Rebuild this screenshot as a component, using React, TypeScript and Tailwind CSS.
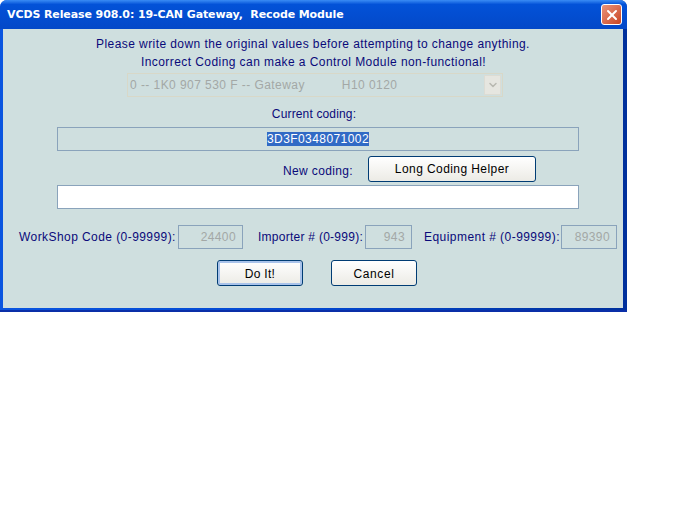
import React from 'react';
import { ChevronDown, X } from 'lucide-react';

const ReadOnlyNumber = ({ value, width }: { value: string; width: string }) => (
  <div className={`${width} h-[24px] border border-[#8aa3bb] flex items-center justify-end pr-[6px] tracking-[0.4px] text-[#a3a8a6]`}>
    {value}
  </div>
);

const XpButton = ({ label, className }: { label: string; className: string }) => (
  <button
    type="button"
    className={`h-[26px] rounded-[3px] border border-[#003c74] bg-gradient-to-b from-white to-[#ecebe5] text-black ${className}`}
  >
    {label}
  </button>
);

export default function App() {
  return (
    <div className="w-[676px] h-[507px] bg-white font-['Liberation_Sans',sans-serif] text-[12px] leading-[14px]">
      <div className="w-[627px] h-[312px] flex flex-col rounded-t-[7px] overflow-hidden border-b-[2px] border-[#0a2fa8] bg-gradient-to-r from-[#0a55e0] via-[#0348d0] to-[#00309c]">
        {/* Title bar */}
        <div className="h-[29px] shrink-0 flex items-center justify-between pl-[7px] pr-[5px] bg-gradient-to-b from-[#3a8cf5] via-[#0352d8] via-15% to-[#0348c8]">
          <span className="font-['DejaVu_Sans',sans-serif] font-bold text-[11px] tracking-[-0.1px] text-white whitespace-pre">
            VCDS Release 908.0: 19-CAN Gateway,  Recode Module
          </span>
          <button
            type="button"
            className="w-[21px] h-[21px] rounded-[3px] border border-white bg-gradient-to-br from-[#e8937a] to-[#c9431f] flex items-center justify-center"
          >
            <X className="w-[16px] h-[16px] text-white" strokeWidth={3} />
          </button>
        </div>

        {/* Dialog body */}
        <div className="flex-1 ml-[3px] mr-[4px] mb-[2px] bg-[#cfdfdf] flex flex-col text-[#0a0a7a]">
          <p className="mt-[8px] text-center tracking-[0.42px]">
            Please write down the original values before attempting to change anything.
          </p>
          <p className="mt-[4px] text-center tracking-[0.43px] pl-[1px]">
            Incorrect Coding can make a Control Module non-functional!
          </p>

          <div className="mt-[4px] ml-[124px] w-[376px] h-[24px] border border-[#d8d8c8] flex items-center justify-between pl-[2px] pr-[1px] text-[#a3a8a6]">
            <span className="flex gap-[37px] tracking-[0.44px]">
              <span>0 -- 1K0 907 530 F -- Gateway</span>
              <span>H10 0120</span>
            </span>
            <span className="w-[17px] h-[20px] bg-[#e6e6e0] border border-[#dcdcd4] flex items-center justify-center">
              <ChevronDown className="w-[12px] h-[12px] text-[#b8b8b0]" strokeWidth={3} />
            </span>
          </div>

          <p className="mt-[10px] text-center tracking-[0.15px] pl-[2px]">Current coding:</p>
          <div className="mt-[6px] ml-[54px] w-[522px] h-[24px] border border-[#8aa3bb] flex items-center justify-center">
            <span className="bg-[#316ac5] text-white tracking-[0.43px]">3D3F0348071002</span>
          </div>

          <div className="mt-[5px] h-[26px] flex items-center">
            <span className="ml-[280px] mt-[4px] w-[85px] tracking-[0.36px]">New coding:</span>
            <XpButton label="Long Coding Helper" className="w-[168px] tracking-[0.42px]" />
          </div>
          <div className="mt-[3px] ml-[54px] w-[522px] h-[24px] border border-[#8aa3bb] bg-white" />

          <div className="mt-[16px] flex items-center">
            <span className="ml-[16px] w-[159px] tracking-[0.43px]">WorkShop Code (0-99999):</span>
            <ReadOnlyNumber value="24400" width="w-[65px]" />
            <span className="ml-[15px] w-[107px] tracking-[0.26px]">Importer # (0-999):</span>
            <ReadOnlyNumber value="943" width="w-[47px]" />
            <span className="ml-[12px] w-[137px] tracking-[0.45px]">Equipment # (0-99999):</span>
            <ReadOnlyNumber value="89390" width="w-[56px]" />
          </div>

          <div className="mt-[11px] flex">
            <XpButton label="Do It!" className="ml-[214px] w-[86px] pt-[1px] tracking-[0.3px] shadow-[inset_0_0_0_2px_#a9c3ea]" />
            <XpButton label="Cancel" className="ml-[28px] w-[86px] pt-[1px] tracking-[0.6px]" />
          </div>
        </div>
      </div>
    </div>
  );
}
